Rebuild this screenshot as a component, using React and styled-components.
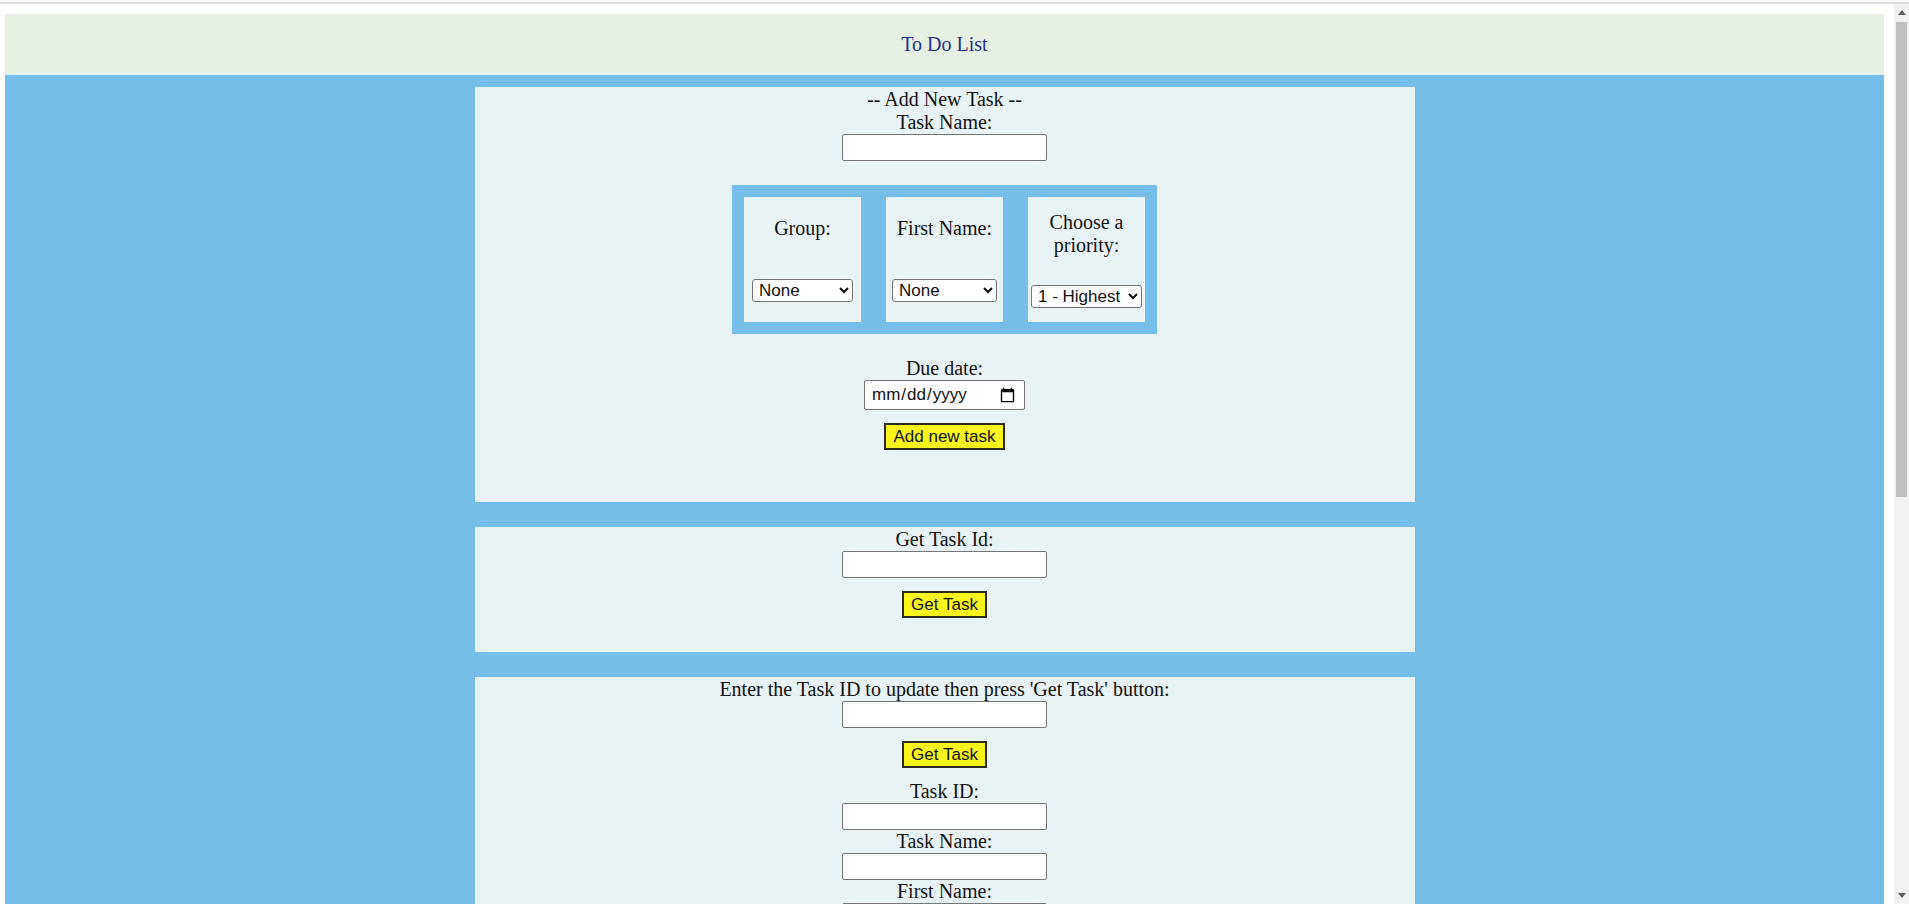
import React from 'react';
import styled, { createGlobalStyle } from 'styled-components';

const GlobalStyle = createGlobalStyle`
  html, body {
    margin: 0;
    padding: 0;
    background: #ffffff;
    overflow: hidden;
  }
  * { box-sizing: border-box; }
`;

const Frame = styled.div`
  display: flex;
  flex-direction: column;
  height: 100vh;
`;

const TopRule = styled.div`
  height: 2px;
  margin-top: 2px;
  background: #dcdcdc;
  flex: none;
`;

const Window = styled.div`
  flex: 1;
  min-height: 0;
  display: flex;
`;

const Viewport = styled.div`
  flex: 1;
  min-width: 0;
  overflow: hidden;
  padding: 10px 10px 0 5px;
  font-family: "Liberation Serif", "Times New Roman", serif;
  font-size: 20px;
  line-height: 23px;
  color: #111;
`;

const Header = styled.header`
  height: 61px;
  padding-top: 1px;
  background: #e6f0e3;
  border-bottom: 1px solid #dcf3f0;
  display: flex;
  align-items: center;
  justify-content: center;
  color: #28338c;
`;

const Main = styled.main`
  background: #74bee9;
  padding-top: 12px;
  min-height: 900px;
`;

const Card = styled.section`
  width: 940px;
  margin: 0 auto 25px;
  background: #e9f2f4;
  text-align: center;
  padding: 1px 0 ${({ $bottom }) => $bottom}px;
`;

const Label = styled.div``;

const TextInput = styled.input`
  display: block;
  margin: 0 auto;
  width: 205px;
  height: 27px;
  border: 1px solid #767676;
  border-radius: 2px;
  background: #fff;
  font-family: "Liberation Sans", Arial, sans-serif;
  font-size: 17px;
`;

const DateInput = styled(TextInput)`
  width: 161px;
  height: 30px;
  padding: 0 6px;
  color: #111;
`;

const Button = styled.button`
  display: block;
  margin: 13px auto 12px;
  height: 27px;
  padding: 0 7px;
  background: #f9f51c;
  border: 2px solid #2b2b22;
  font-family: "Liberation Sans", Arial, sans-serif;
  font-size: 17px;
  color: #111;
  cursor: pointer;
`;

const OptionBox = styled.div`
  width: 425px;
  margin: 24px auto 23px;
  padding: 12px;
  background: #74bee9;
  display: flex;
  gap: 25px;
`;

const OptionCell = styled.div`
  width: 117px;
  height: 125px;
  background: #e9f2f4;
  display: flex;
  flex-direction: column;
  align-items: center;
  justify-content: space-around;
`;

const Select = styled.select`
  width: ${({ $w }) => $w}px;
  height: 23px;
  border: 1px solid #767676;
  border-radius: 3px;
  background: #fff;
  font-family: "Liberation Sans", Arial, sans-serif;
  font-size: 17px;
  color: #111;
  padding: 0 2px;
`;

const Scrollbar = styled.div`
  width: 15px;
  flex: none;
  background: #f1f1f1;
  display: flex;
  flex-direction: column;
  align-items: center;
`;

const Arrow = styled.div`
  height: 17px;
  width: 100%;
  display: flex;
  align-items: center;
  justify-content: center;
  flex: none;
`;

const Thumb = styled.div`
  width: 11px;
  height: 475px;
  margin-top: 1px;
  background: #c1c1c1;
  flex: none;
`;

const Track = styled.div`
  flex: 1;
`;

const ArrowIcon = ({ down }) => (
  <svg width="8" height="5" viewBox="0 0 8 5">
    <path d={down ? 'M0 0 H8 L4 5 Z' : 'M0 5 H8 L4 0 Z'} fill="#606060" />
  </svg>
);

export default function App() {
  return (
    <Frame>
      <GlobalStyle />
      <TopRule />
      <Window>
        <Viewport>
          <Header>To Do List</Header>
          <Main>
            <Card $bottom={40}>
              <Label>-- Add New Task --</Label>
              <Label>Task Name:</Label>
              <TextInput type="text" />
              <OptionBox>
                <OptionCell>
                  <Label>Group:</Label>
                  <Select $w={101}>
                    <option>None</option>
                  </Select>
                </OptionCell>
                <OptionCell>
                  <Label>First Name:</Label>
                  <Select $w={105}>
                    <option>None</option>
                  </Select>
                </OptionCell>
                <OptionCell>
                  <Label>Choose a priority:</Label>
                  <Select $w={111}>
                    <option>1 - Highest</option>
                    <option>2 - High</option>
                    <option>3 - Medium</option>
                    <option>4 - Low</option>
                  </Select>
                </OptionCell>
              </OptionBox>
              <Label>Due date:</Label>
              <DateInput type="date" />
              <Button>Add new task</Button>
            </Card>

            <Card $bottom={22}>
              <Label>Get Task Id:</Label>
              <TextInput type="text" />
              <Button>Get Task</Button>
            </Card>

            <Card $bottom={22}>
              <Label>Enter the Task ID to update then press 'Get Task' button:</Label>
              <TextInput type="text" />
              <Button>Get Task</Button>
              <Label>Task ID:</Label>
              <TextInput type="text" />
              <Label>Task Name:</Label>
              <TextInput type="text" />
              <Label>First Name:</Label>
              <TextInput type="text" />
            </Card>
          </Main>
        </Viewport>
        <Scrollbar>
          <Arrow><ArrowIcon /></Arrow>
          <Thumb />
          <Track />
          <Arrow><ArrowIcon down /></Arrow>
        </Scrollbar>
      </Window>
    </Frame>
  );
}
